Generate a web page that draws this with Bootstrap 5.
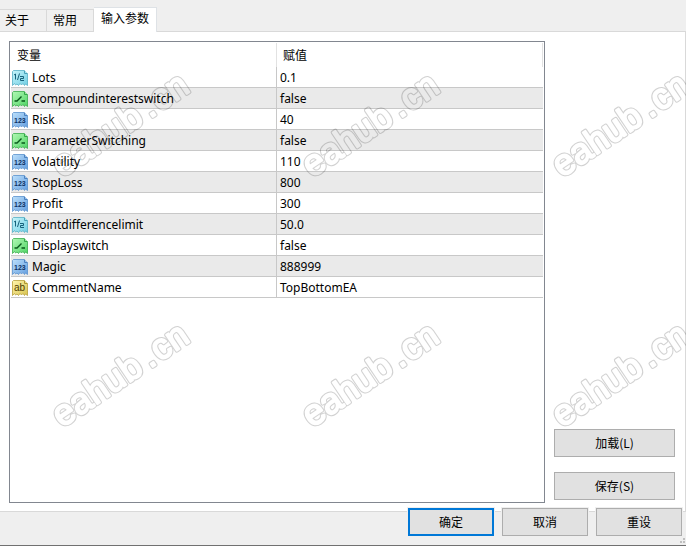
<!DOCTYPE html>
<html lang="zh-CN">
<head>
<meta charset="utf-8">
<meta name="viewport" content="width=device-width, initial-scale=1">
<title>输入参数</title>
<link href="https://cdn.jsdelivr.net/npm/bootstrap@5.3.0/dist/css/bootstrap.min.css" rel="stylesheet">
<style>
body{font-family:"Noto Sans","Noto Sans CJK SC",sans-serif;font-size:12px;line-height:16px;color:#000;background:#efefef;border-bottom:1px solid #707070}
.zh{font-family:"Noto Sans CJK SC",sans-serif}
.tabs{--bs-nav-tabs-border-width:1px;border-bottom:1px solid #d9d9d9;height:32px}
.tabs .nav-link{height:22px;padding:0 16px 2px 6px;border:1px solid #d9d9d9;border-left:0;border-bottom:0;border-radius:0;color:#000;background:#f0f0f0;font-size:12px;line-height:18px;margin-bottom:0}
.tabs .first{padding:0 17px 2px 5px}
.tabs .nav-link.active{height:25px;padding:0 7px 4px;background:#fff;color:#000;margin-bottom:-1px}
.pane{background:#fff;border-right:1px solid #d9d9d9;border-bottom:1px solid #d9d9d9;padding:9px 10px 8px 9px;gap:9px}
.list{border:1px solid #828790;padding:1px}
.params{table-layout:fixed;border-collapse:separate;border-spacing:0;font-size:12px;line-height:18px}
.params th{height:24px;padding:0 6px;font-size:12px;font-weight:400;border-right:1px solid #e2e2e2}
.params td{height:21px;padding:2px 1px 0;border-bottom:1px solid #c8c8c8}
.params td:first-child{border-right:1px solid #c8c8c8}
.params td:last-child{padding-left:3px}
.params tr:nth-child(even) td{background:#eaeaea}
.params svg{width:16px;height:16px;margin-right:4px;vertical-align:-4px}
.name-col{width:50%}
.side{width:121px;gap:15px;padding-bottom:3px}
.cmd{height:28px;padding:0;border:1px solid #adadad;border-radius:0;background:#e1e1e1;color:#000;font-size:12px;line-height:16px}
.cmd.ok{border:2px solid #0078d7}
.foot{gap:8px;margin-top:-4px;padding:0 4px 9px 0;z-index:1}
.foot .cmd{width:86px;height:28px;box-shadow:0 0 0 1px #efefef}
.grip{right:1px;bottom:2px;width:5px;height:5px}
.marks{z-index:3;pointer-events:none;inset:0}
.marks text{font:36px "Liberation Sans",sans-serif}
.glyph{font:700 7px "Liberation Sans",sans-serif}
.glyph-ab{font:10px "Liberation Sans",sans-serif}
</style>
<script src="https://cdn.jsdelivr.net/npm/bootstrap@5.3.0/dist/js/bootstrap.bundle.min.js"></script>
</head>
<body class="d-flex flex-column min-vh-100 position-relative overflow-hidden">
<svg width="0" height="0" class="position-absolute" aria-hidden="true">
<defs>
<linearGradient id="gc" x2="1" y2="1"><stop stop-color="#c5f4fa"/><stop offset="1" stop-color="#72cfe4"/></linearGradient>
<linearGradient id="gg" x2="1" y2="1"><stop stop-color="#b1f8b4"/><stop offset="1" stop-color="#51d566"/></linearGradient>
<linearGradient id="gb" x2="1" y2="1"><stop stop-color="#bce0fb"/><stop offset="1" stop-color="#659fe0"/></linearGradient>
<linearGradient id="gy" x2="1" y2="1"><stop stop-color="#fff6ae"/><stop offset="1" stop-color="#d9c34f"/></linearGradient>
<path id="sheet" stroke-opacity=".8" d="M.5 1.500L1.500.5H12L15.500 4V15.500L13.500 14 12.500 15.500 11 13.500 9.500 15 8 13.500 6.500 15.500 5 14 3.500 15 2.500 13.500 .5 15.500Z"/>
<symbol id="i-num" viewBox="0 0 16 16"><use href="#sheet" fill="url(#gc)" stroke="#55afc5"/><path d="M12.500.5V3.500H15.500" fill="#a5e5ef" stroke="#48a0b8"/><path d="M3.500 4V9.500M2 5L3.500 4M7.500 3.500L5.500 10M8 6.500H11.500V8.500H8.500V10.500H12" stroke="#17627b" fill="none"/></symbol>
<symbol id="i-bool" viewBox="0 0 16 16"><use href="#sheet" fill="url(#gg)" stroke="#3bad4c"/><path d="M12.500.5V3.500H15.500" fill="#8deb96" stroke="#35a548"/><path d="M2.500 10H5L9.500 5.500M9.500 10H13" stroke="#08591b" stroke-width="1.400" fill="none"/></symbol>
<symbol id="i-int" viewBox="0 0 16 16"><use href="#sheet" fill="url(#gb)" stroke="#5a92ce"/><path d="M12.500.5V3.500H15.500" fill="#91bdec" stroke="#4d82bf"/><text class="glyph" x="2" y="11" fill="#0d3263">123</text></symbol>
<symbol id="i-str" viewBox="0 0 16 16"><use href="#sheet" fill="url(#gy)" stroke="#b8a03a"/><path d="M12.500.5V3.500H15.500" fill="#eddd7c" stroke="#ab9433"/><text class="glyph-ab" x="2" y="11" fill="#4d3c00">ab</text></symbol>
</defs>
</svg>

<div class="nav nav-tabs tabs align-items-end flex-shrink-0 zh" role="tablist">
<button class="nav-link first" role="tab" type="button">关于</button>
<button class="nav-link" role="tab" type="button">常用</button>
<button class="nav-link active" role="tab" type="button" aria-selected="true">输入参数</button>
</div>

<main class="pane d-flex flex-grow-1">
<div class="list flex-grow-1">
<table class="params w-100">
<thead><tr class="zh"><th class="name-col" scope="col">变量</th><th scope="col">赋值</th></tr></thead>
<tbody>
<tr><td><svg aria-hidden="true"><use href="#i-num"/></svg>Lots</td><td>0.1</td></tr>
<tr><td><svg aria-hidden="true"><use href="#i-bool"/></svg>Compoundinterestswitch</td><td>false</td></tr>
<tr><td><svg aria-hidden="true"><use href="#i-int"/></svg>Risk</td><td>40</td></tr>
<tr><td><svg aria-hidden="true"><use href="#i-bool"/></svg>ParameterSwitching</td><td>false</td></tr>
<tr><td><svg aria-hidden="true"><use href="#i-int"/></svg>Volatility</td><td>110</td></tr>
<tr><td><svg aria-hidden="true"><use href="#i-int"/></svg>StopLoss</td><td>800</td></tr>
<tr><td><svg aria-hidden="true"><use href="#i-int"/></svg>Profit</td><td>300</td></tr>
<tr><td><svg aria-hidden="true"><use href="#i-num"/></svg>Pointdifferencelimit</td><td>50.0</td></tr>
<tr><td><svg aria-hidden="true"><use href="#i-bool"/></svg>Displayswitch</td><td>false</td></tr>
<tr><td><svg aria-hidden="true"><use href="#i-int"/></svg>Magic</td><td>888999</td></tr>
<tr><td><svg aria-hidden="true"><use href="#i-str"/></svg>CommentName</td><td>TopBottomEA</td></tr>
</tbody>
</table>
</div>
<div class="side d-flex flex-column justify-content-end flex-shrink-0 zh">
<button class="btn cmd" type="button">加载(L)</button>
<button class="btn cmd" type="button">保存(S)</button>
</div>
</main>

<footer class="foot d-flex justify-content-end position-relative zh">
<button class="btn cmd ok" type="button">确定</button>
<button class="btn cmd" type="button">取消</button>
<button class="btn cmd" type="button">重设</button>
<svg class="grip position-absolute" viewBox="0 0 5 5" aria-hidden="true"><path d="M3 0h2v2H3zM0 3h2v2H0zM3 3h2v2H3z" fill="#bfbfbf"/></svg>
</footer>

<svg class="marks position-absolute w-100 h-100" aria-hidden="true">
<defs>
<g id="wt"><text>eahub</text><text x="106">.</text><text x="118">cn</text></g>
<mask id="ring" maskUnits="userSpaceOnUse" x="-10" y="-50" width="200" height="70">
<use href="#wt" stroke="#fff" fill="#fff" stroke-width="4" stroke-linejoin="round"/>
<use href="#wt" stroke="#000" fill="#000" stroke-width="2" stroke-linejoin="round"/>
</mask>
<g id="wm" transform="translate(62 428) rotate(-34)"><rect x="-10" y="-50" width="200" height="70" fill="#000" fill-opacity=".18" mask="url(#ring)"/></g>
</defs>
<use href="#wm" y="-250"/><use href="#wm" x="250" y="-250"/><use href="#wm" x="500" y="-250"/>
<use href="#wm"/><use href="#wm" x="250"/><use href="#wm" x="500"/>
</svg>
</body>
</html>
